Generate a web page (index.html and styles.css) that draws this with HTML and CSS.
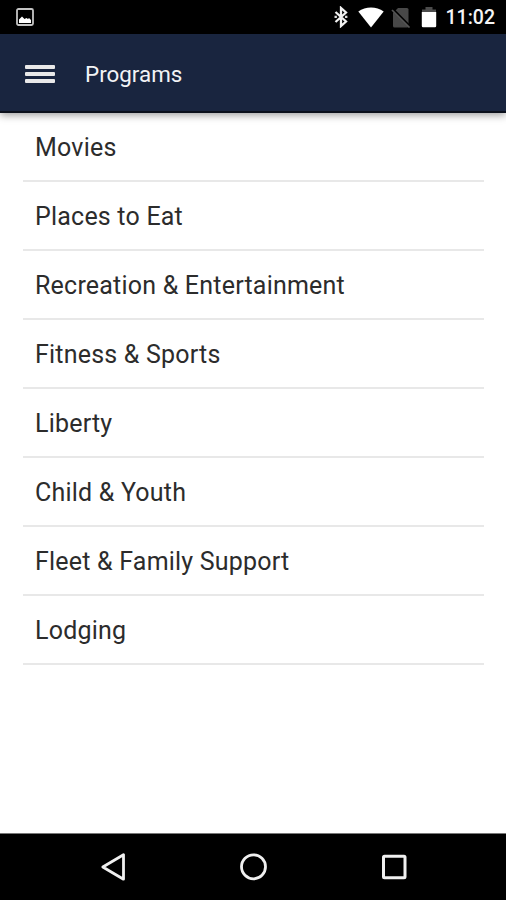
FILE: index.html
```
<!DOCTYPE html>
<html lang="en">
<head>
    <meta charset="UTF-8">
    <meta name="viewport" content="width=device-width, initial-scale=1.0">
    <title>Programs</title>
    <link rel="stylesheet" href="styles.css">
</head>
<body>
    <div class="status-bar">
        <svg class="picture-icon" width="18" height="18" viewBox="0 0 18 18">
            <rect x="1" y="1" width="16" height="16" rx="1.5" fill="none" stroke="#c4c4c4" stroke-width="1.8"/>
            <path d="M3 15v-3.500l3-3 2.500 2.500 2-1 1.500 1 1-1 2 2v3z" fill="#fff"/>
        </svg>
        <div class="status-icons">
            <svg class="bluetooth" width="14" height="22" viewBox="0 0 14 22">
                <path d="M1.5 6L12 15.5 7 20V2l5 4.500L1.500 16" fill="none" stroke="#f2f2f2" stroke-width="2.300"/>
                <path d="M.5 9.700h2.400v2.400H.5zM11 9.700h2.400v2.400H11z" fill="#ddd"/>
            </svg>
            <svg class="wifi" width="26" height="21" viewBox="0 0 26 21">
                <path d="M.3 4.500C7.500-.8 18.500-.8 25.700 4.500L13 20.500z" fill="#fff"/>
            </svg>
            <svg class="no-sim" width="20" height="21" viewBox="0 0 20 21">
                <path d="M7 1h9a1.500 1.500 0 0 1 1.500 1.500V19a1.500 1.500 0 0 1-1.500 1.500H3.500A1.500 1.500 0 0 1 2 19V6z" fill="#484848"/>
                <path d="M2 2.500L19.500 20" stroke="#000" stroke-width="2.500"/>
                <path d="M1 3L18.500 20.500" stroke="#555" stroke-width="1.700"/>
            </svg>
            <svg class="battery" width="16" height="22" viewBox="0 0 16 22">
                <path d="M1 6V3.500h3.500V1h7v2.500H15V6z" fill="#4c4c4c"/>
                <path d="M.8 6h14.400v14a1.200 1.200 0 0 1-1.200 1.200H2A1.200 1.200 0 0 1 .8 20z" fill="#fff"/>
            </svg>
            <span class="clock">11:02</span>
        </div>
    </div>

    <header class="header">
        <div class="menu">
            <span></span>
            <span></span>
            <span></span>
        </div>
        <h1>Programs</h1>
    </header>

    <main class="content">
        <ul class="programs">
            <li>Movies</li>
            <li>Places to Eat</li>
            <li>Recreation &amp; Entertainment</li>
            <li>Fitness &amp; Sports</li>
            <li>Liberty</li>
            <li>Child &amp; Youth</li>
            <li>Fleet &amp; Family Support</li>
            <li>Lodging</li>
        </ul>
    </main>

    <nav class="nav-bar">
        <svg width="28" height="30" viewBox="0 0 28 30">
            <path d="M24.500 2.800v24.400L3.800 15z" fill="none" stroke="#f0f0f0" stroke-width="2.800" stroke-linejoin="round"/>
        </svg>
        <svg width="28" height="30" viewBox="0 0 28 30">
            <circle cx="13.500" cy="14.800" r="12" fill="none" stroke="#f0f0f0" stroke-width="2.800"/>
        </svg>
        <svg width="28" height="30" viewBox="0 0 28 30">
            <rect x="3.500" y="4.200" width="21.500" height="21.500" rx="1" fill="none" stroke="#f0f0f0" stroke-width="3"/>
        </svg>
    </nav>
</body>
</html>
```
FILE: styles.css
```
* {
    padding: 0;
    margin: 0;
    box-sizing: border-box;
}

body {
    font-family: Roboto, sans-serif;
    background-color: #fff;
    height: 900px;
    display: flex;
    flex-direction: column;
    overflow: hidden;
}

.status-bar {
    height: 34px;
    background-color: #000;
    display: flex;
    align-items: center;
    justify-content: space-between;
    padding: 0 11px 0 16px;
}

.status-icons {
    display: flex;
    align-items: center;
}

.bluetooth {
    margin-right: 10px;
}

.wifi {
    margin-right: 7px;
}

.no-sim {
    margin-right: 10px;
}

.battery {
    margin-right: 9px;
}

.clock {
    color: #f4f4f4;
    font-size: 19.5px;
    font-weight: 500;
    line-height: 34px;
    padding-top: 2px;
}

.header {
    height: 79px;
    background-color: #19253f;
    border-bottom: 2px solid #0b101c;
    box-shadow: 0 2px 8px rgba(0, 0, 0, 0.4);
    display: flex;
    align-items: center;
    padding: 2px 25px 0;
    position: relative;
}

.menu {
    width: 30px;
    display: flex;
    flex-direction: column;
    gap: 3px;
    margin-right: 30px;
}

.menu span {
    height: 4px;
    background-color: #e9e9e9;
    border-radius: 1px;
}

h1 {
    color: #f2f3f5;
    font-size: 22.4px;
    font-weight: 400;
}

.content {
    flex: 1;
    padding: 0 22px 0 23px;
}

.programs {
    list-style: none;
}

.programs li {
    height: 69px;
    padding-left: 12px;
    border-bottom: 2px solid #e8e8e8;
    color: #2c2c2c;
    font-size: 25px;
    letter-spacing: 0.21px;
    line-height: 70px;
}

.nav-bar {
    height: 67px;
    background-color: #000;
    border-top: 1px solid #777;
    display: flex;
    align-items: center;
    justify-content: space-between;
    padding: 0 98px 0 99px;
}
```
